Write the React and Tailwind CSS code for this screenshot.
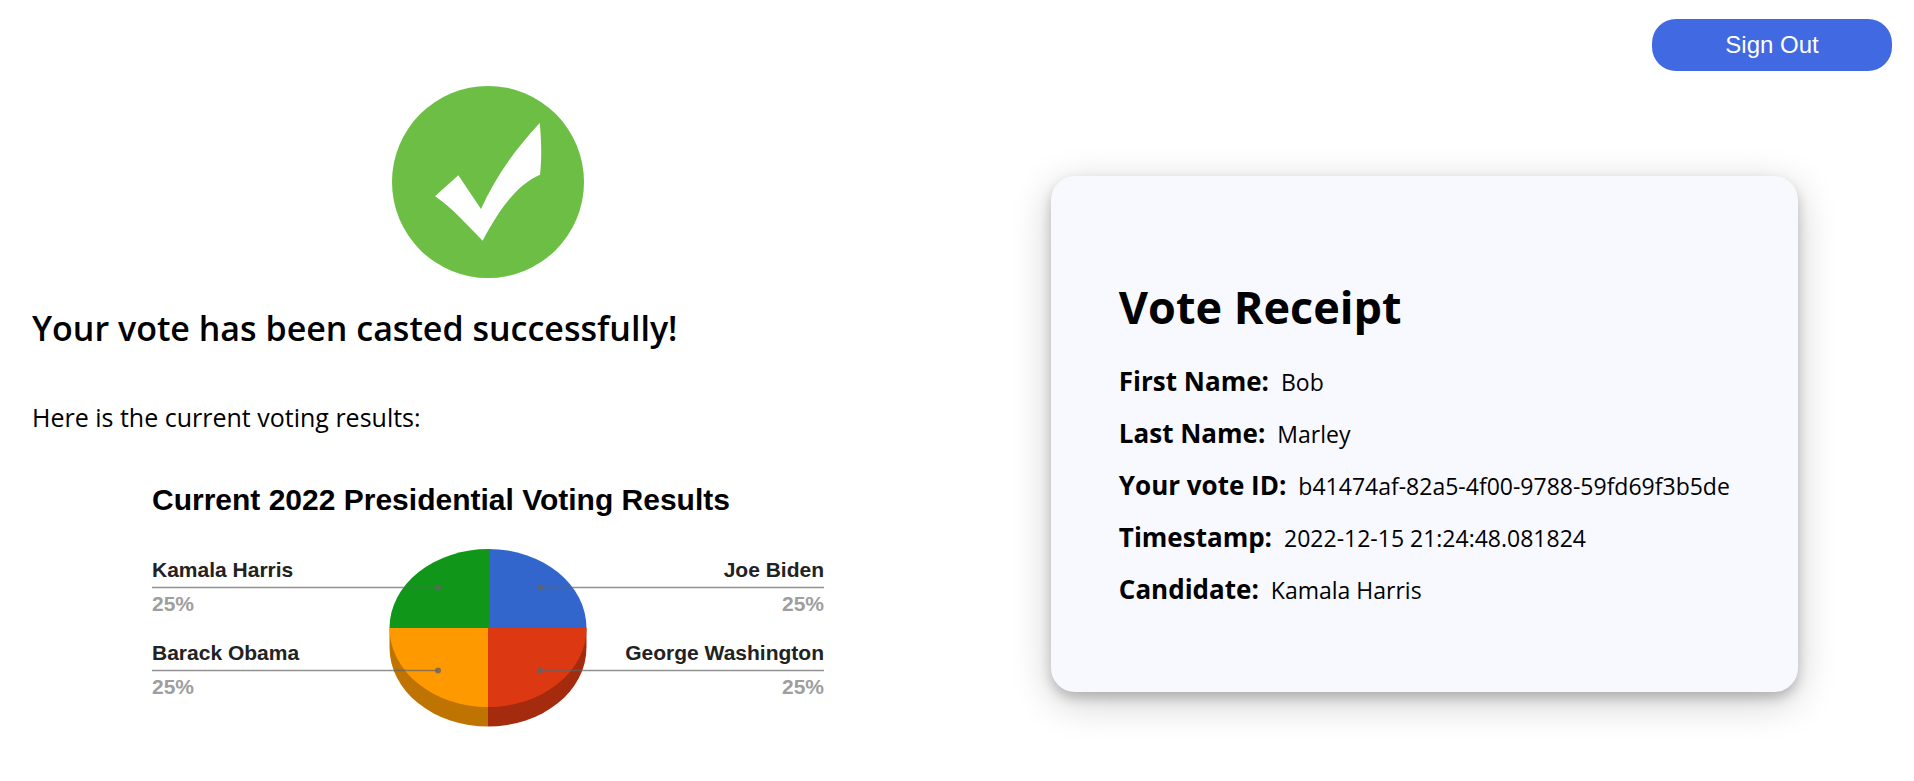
const receipt = [
  ["First Name:", "Bob"],
  ["Last Name:", "Marley"],
  ["Your vote ID:", "b41474af-82a5-4f00-9788-59fd69f3b5de"],
  ["Timestamp:", "2022-12-15 21:24:48.081824"],
  ["Candidate:", "Kamala Harris"],
];

const labels = [
  { name: "Kamala Harris", share: "25%", x: 0, y: 106, side: "left" },
  { name: "Barack Obama", share: "25%", x: 0, y: 189, side: "left" },
  { name: "Joe Biden", share: "25%", x: 672, y: 106, side: "right" },
  { name: "George Washington", share: "25%", x: 672, y: 189, side: "right" },
];

function SuccessIcon() {
  return (
    <svg viewBox="36 33 576 576" className="size-48" role="img" aria-label="Success">
      <circle cx="324" cy="321" r="288" fill="#6cbe45" />
      <path
        fill="#fff"
        d="M479 144C484 190 486 250 480 299C420 324 368 385 308 497C265 455 215 396 165 364L235 301L303 402C345 310 401 228 479 144Z"
      />
    </svg>
  );
}

function ResultsChart() {
  return (
    <svg
      viewBox="0 0 672 250"
      className="w-[672px] max-w-full font-['Liberation_Sans',Arial,sans-serif] font-bold"
      role="img"
      aria-label="Current 2022 Presidential Voting Results"
    >
      <text x="0" y="29" fontSize="30">
        Current 2022 Presidential Voting Results
      </text>
      {/* sides of the disc */}
      <path d="M237.5 147V166.5A98.5 79 0 0 0 336 245.5V147Z" fill="#bf7300" />
      <path d="M434.5 147V166.5A98.5 79 0 0 1 336 245.5V147Z" fill="#a52b0e" />
      {/* top face */}
      <path d="M337 147V68A99 79 0 0 0 237.5 147Z" fill="#109618" />
      <path d="M337 147V68A98 79 0 0 1 434.5 147Z" fill="#3366cc" />
      <path d="M336 147H237.5A98.5 79 0 0 0 336 226Z" fill="#ff9900" />
      <path d="M336 147H434.5A98.5 79 0 0 1 336 226Z" fill="#dc3912" />
      {labels.map((l) => {
        const left = l.side === "left";
        const dot = left ? 286 : 388;
        return (
          <g key={l.name} textAnchor={left ? "start" : "end"} fontSize="21">
            <text x={l.x} y={l.y - 10} fill="#222222">
              {l.name}
            </text>
            <path
              d={left ? `M0 ${l.y + 0.5}H${dot}` : `M${dot} ${l.y + 0.5}H672`}
              stroke="#636363"
              strokeOpacity="0.7"
              strokeWidth="1.4"
            />
            <circle cx={dot} cy={l.y + 0.5} r="3" fill="#636363" fillOpacity="0.8" />
            <text x={l.x} y={l.y + 24} fill="#9e9e9e">
              {l.share}
            </text>
          </g>
        );
      })}
    </svg>
  );
}

export default function App() {
  return (
    <div className="bg-white font-['Open_Sans','Noto_Sans',sans-serif] text-black">
      <header className="flex justify-end pt-[19px] pr-[22px]">
        <button
          type="button"
          className="h-[52px] w-60 rounded-[24px] bg-[#4169e1] font-['Liberation_Sans',Arial,sans-serif] text-2xl text-white"
        >
          Sign Out
        </button>
      </header>
      <main className="grid grid-cols-[12fr_11fr] items-start pr-[42px]">
        <section className="flex flex-col items-center px-8 pt-[15px]">
          <SuccessIcon />
          <h1 className="mt-[26px] self-stretch text-[34px] leading-[48px] font-semibold">
            Your vote has been casted successfully!
          </h1>
          <p className="mt-[47px] self-stretch text-[25px] leading-[36px]">
            Here is the current voting results:
          </p>
          <div className="mt-[46px]">
            <ResultsChart />
          </div>
        </section>
        <section className="mt-[105px] mb-16 w-fit justify-self-center rounded-[24px] bg-[#f8f8ff] px-[68px] pt-[99px] pb-[77px] shadow-[0_6px_12px_0_rgba(0,0,0,0.2),0_10px_40px_0_rgba(0,0,0,0.2)]">
          <h2 className="text-[45px] leading-[64px] font-bold">Vote Receipt</h2>
          <dl className="mt-4">
            {receipt.map(([label, value]) => (
              <div key={label} className="flex h-[52px] items-baseline gap-3">
                <dt className="text-[26px] leading-[52px] font-bold">{label}</dt>
                <dd className="text-[23px] leading-[52px]">{value}</dd>
              </div>
            ))}
          </dl>
        </section>
      </main>
    </div>
  );
}
